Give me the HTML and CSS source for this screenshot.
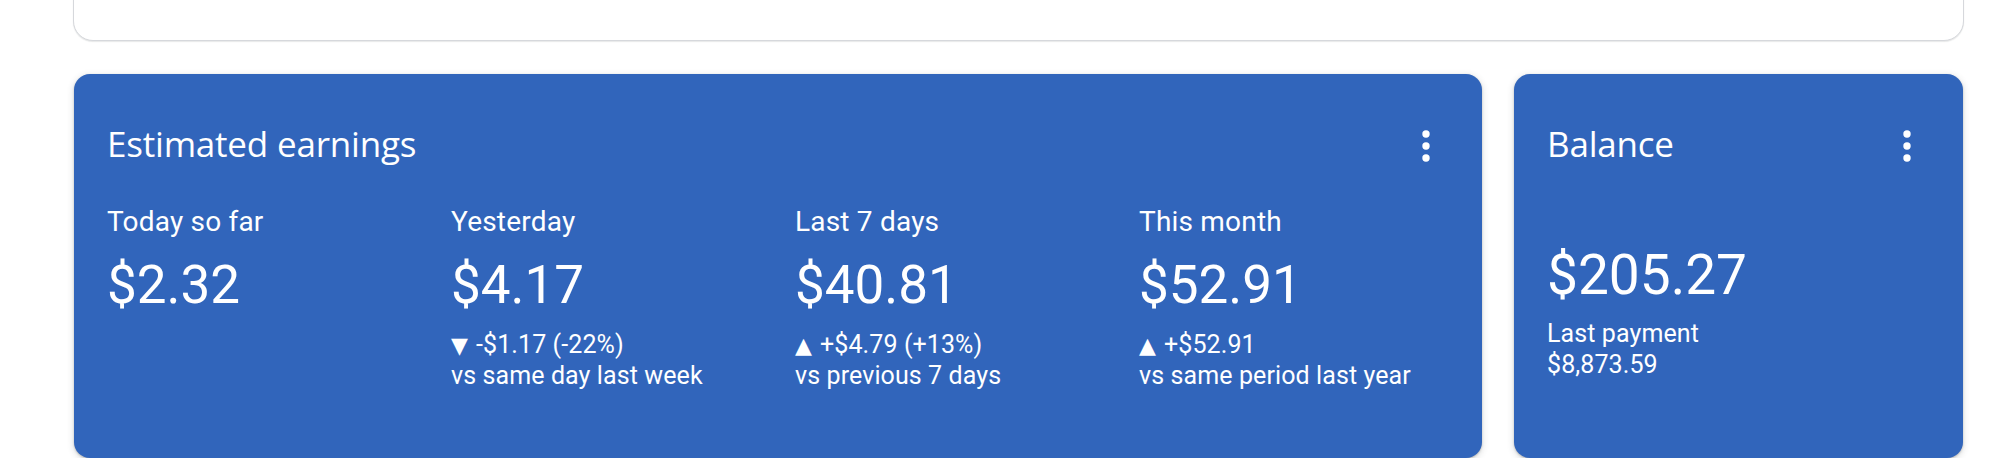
FILE: index.html
```html
<!DOCTYPE html>
<html lang="en">
<head>
<meta charset="utf-8">
<title>Earnings</title>
<link rel="stylesheet" href="styles.css">
</head>
<body>
<div class="page">
  <div class="top-card"></div>
  <div class="cards">
    <section class="card earnings">
      <div class="card-head">
        <h2 class="card-title">Estimated earnings</h2>
        <svg class="kebab" viewBox="0 0 40 40" width="40" height="40" aria-hidden="true">
          <circle cx="20" cy="10" r="3.7"/>
          <circle cx="20" cy="22" r="3.7"/>
          <circle cx="20" cy="34" r="3.7"/>
        </svg>
      </div>
      <div class="metrics">
        <div class="metric">
          <div class="metric-label">Today so far</div>
          <div class="metric-value">$2.32</div>
        </div>
        <div class="metric">
          <div class="metric-label">Yesterday</div>
          <div class="metric-value">$4.17</div>
          <div class="metric-change"><span class="tri">▼</span>-$1.17 (-22%)</div>
          <div class="metric-note">vs same day last week</div>
        </div>
        <div class="metric">
          <div class="metric-label">Last 7 days</div>
          <div class="metric-value">$40.81</div>
          <div class="metric-change"><span class="tri">▲</span>+$4.79 (+13%)</div>
          <div class="metric-note">vs previous 7 days</div>
        </div>
        <div class="metric">
          <div class="metric-label">This month</div>
          <div class="metric-value">$52.91</div>
          <div class="metric-change"><span class="tri">▲</span>+$52.91</div>
          <div class="metric-note">vs same period last year</div>
        </div>
      </div>
    </section>
    <section class="card balance">
      <div class="card-head">
        <h2 class="card-title">Balance</h2>
        <svg class="kebab" viewBox="0 0 40 40" width="40" height="40" aria-hidden="true">
          <circle cx="20" cy="10" r="3.7"/>
          <circle cx="20" cy="22" r="3.7"/>
          <circle cx="20" cy="34" r="3.7"/>
        </svg>
      </div>
      <div class="balance-value">$205.27</div>
      <div class="balance-meta">
        <div>Last payment</div>
        <div>$8,873.59</div>
      </div>
    </section>
  </div>
</div>
</body>
</html>
```
FILE: styles.css
```css
html, body {
  margin: 0;
  padding: 0;
  background: #ffffff;
}

body {
  font-family: Roboto, "Liberation Sans", Arial, sans-serif;
  color: #ffffff;
  overflow: hidden;
}

.page {
  display: flex;
  flex-direction: column;
  gap: 33px;
  padding: 0 46px 0 73px;
}

.top-card {
  margin-top: -60px;
  height: 99px;
  border: 1px solid #d6d8dc;
  border-radius: 20px;
  background: #ffffff;
  box-shadow: 0 1px 1px rgba(60, 64, 67, 0.12);
}

.cards {
  display: flex;
  gap: 32px;
  margin: 0 1px;
}

.card {
  background: #3165bb;
  border-radius: 16px;
  box-shadow: 0 1px 2px rgba(60, 64, 67, 0.3), 0 2px 6px 1px rgba(60, 64, 67, 0.15);
  padding: 50px 36px 67px 33px;
  display: flex;
  flex-direction: column;
}

.earnings {
  flex: 0 0 1408px;
  box-sizing: border-box;
}

.balance {
  flex: 1 1 auto;
}

.card-head {
  display: flex;
  align-items: flex-start;
  justify-content: space-between;
  height: 40px;
}

.card-title {
  margin: 0;
  font-family: "Open Sans", Roboto, sans-serif;
  font-weight: 400;
  font-size: 35px;
  line-height: 40px;
  letter-spacing: -0.2px;
}

.kebab {
  display: block;
  fill: #ffffff;
  flex: 0 0 auto;
}

.metrics {
  display: grid;
  grid-template-columns: 344px 344px 344px 1fr;
  margin-top: 42px;
}

.metric {
  display: flex;
  flex-direction: column;
}

.metric-label {
  font-size: 28px;
  line-height: 32px;
  letter-spacing: 0.2px;
}

.metric-value {
  font-size: 53px;
  line-height: 60px;
  margin-top: 17px;
}

.metric-change {
  font-size: 25px;
  line-height: 30px;
  margin-top: 15px;
  letter-spacing: 0.1px;
}

.metric-note {
  font-size: 25px;
  line-height: 30px;
  letter-spacing: 0.1px;
}

.tri {
  font-family: "DejaVu Sans", sans-serif;
  font-size: 22px;
  display: inline-block;
  width: 25px;
}

.balance-value {
  font-size: 55px;
  line-height: 60px;
  margin-top: 81px;
}

.balance-meta {
  font-size: 25px;
  line-height: 31px;
  margin-top: 13px;
  letter-spacing: 0.1px;
}
```
